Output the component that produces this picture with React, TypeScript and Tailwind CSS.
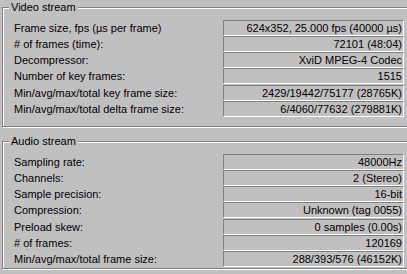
import React from "react";

type Row = { label: string; value: string; h: string };

const video: Row[] = [
  { label: "Frame size, fps (µs per frame)", value: "624x352, 25.000 fps (40000 µs)", h: "h-4" },
  { label: "# of frames (time):", value: "72101 (48:04)", h: "h-4" },
  { label: "Decompressor:", value: "XviD MPEG-4 Codec", h: "h-4" },
  { label: "Number of key frames:", value: "1515", h: "h-[17px]" },
  { label: "Min/avg/max/total key frame size:", value: "2429/19442/75177 (28765K)", h: "h-4" },
  { label: "Min/avg/max/total delta frame size:", value: "6/4060/77632 (279881K)", h: "h-4" },
];

const audio: Row[] = [
  { label: "Sampling rate:", value: "48000Hz", h: "h-4" },
  { label: "Channels:", value: "2 (Stereo)", h: "h-4" },
  { label: "Sample precision:", value: "16-bit", h: "h-4" },
  { label: "Compression:", value: "Unknown (tag 0055)", h: "h-[17px]" },
  { label: "Preload skew:", value: "0 samples (0.00s)", h: "h-4" },
  { label: "# of frames:", value: "120169", h: "h-4" },
  { label: "Min/avg/max/total frame size:", value: "288/393/576 (46152K)", h: "h-4" },
];

function Group({ title, rows, height, mt }: { title: string; rows: Row[]; height: string; mt: string }) {
  return (
    <div
      className={`relative ml-[2px] w-[430px] ${height} ${mt} border border-[#808080] shadow-[inset_1px_1px_0_#fff,1px_1px_0_#fff]`}
    >
      <div className="absolute -top-[7px] left-[6px] bg-[#c0c0c0] px-[2px] leading-[13px]">{title}</div>
      <div className="flex flex-col pt-[12px] pl-[11px]">
        {rows.map((r) => (
          <div key={r.label} className={`flex ${r.h}`}>
            <div className="w-[209px] leading-4 whitespace-nowrap">{r.label}</div>
            <div className="w-[181px] h-4 border border-t-[#808080] border-l-[#808080] border-b-white border-r-white pr-[1px] text-right leading-[14px] whitespace-nowrap">
              {r.value}
            </div>
          </div>
        ))}
      </div>
    </div>
  );
}

export default function App() {
  return (
    <div
      className="w-[407px] h-[274px] overflow-hidden bg-[#c0c0c0] text-black text-[11px] pt-[7px]"
      style={{ fontFamily: '"Liberation Sans", Arial, sans-serif' }}
    >
      <Group title="Video stream" rows={video} height="h-[120px]" mt="mt-0" />
      <Group title="Audio stream" rows={audio} height="h-[128px]" mt="mt-[14px]" />
    </div>
  );
}
